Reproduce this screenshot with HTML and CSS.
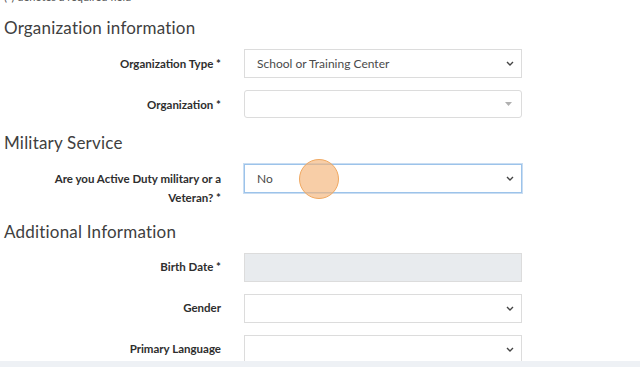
FILE: index.html
```html
<!DOCTYPE html>
<html lang="en">
<head>
    <meta charset="UTF-8">
    <title>Registration</title>
    <link rel="stylesheet" href="styles.css">
</head>
<body>
    <p class="required-note">(*) denotes a required field</p>

    <h2 class="section-title first">Organization information</h2>

    <div class="form-row">
        <label class="form-label">Organization Type *</label>
        <div class="form-field select-field">
            <span>School or Training Center</span>
            <svg class="chevron" width="8" height="5" viewBox="0 0 8 5"><path d="M1 1 L4 4 L7 1" fill="none" stroke="#444" stroke-width="1.4"/></svg>
        </div>
    </div>

    <div class="form-row">
        <label class="form-label">Organization *</label>
        <div class="form-field combo-field">
            <span></span>
            <svg class="caret" width="7" height="4" viewBox="0 0 7 4"><path d="M0 0 H7 L3.5 4 Z" fill="#b0b0b0"/></svg>
        </div>
    </div>

    <h2 class="section-title">Military Service</h2>

    <div class="form-row">
        <label class="form-label">Are you Active Duty military or a Veteran? *</label>
        <div class="form-field select-field focused">
            <span>No</span>
            <svg class="chevron" width="8" height="5" viewBox="0 0 8 5"><path d="M1 1 L4 4 L7 1" fill="none" stroke="#444" stroke-width="1.4"/></svg>
            <div class="click-marker"></div>
        </div>
    </div>

    <h2 class="section-title">Additional Information</h2>

    <div class="form-row">
        <label class="form-label">Birth Date *</label>
        <div class="form-field disabled-field"></div>
    </div>

    <div class="form-row">
        <label class="form-label">Gender</label>
        <div class="form-field select-field">
            <span></span>
            <svg class="chevron" width="8" height="5" viewBox="0 0 8 5"><path d="M1 1 L4 4 L7 1" fill="none" stroke="#444" stroke-width="1.4"/></svg>
        </div>
    </div>

    <div class="form-row">
        <label class="form-label">Primary Language</label>
        <div class="form-field select-field">
            <span></span>
            <svg class="chevron" width="8" height="5" viewBox="0 0 8 5"><path d="M1 1 L4 4 L7 1" fill="none" stroke="#444" stroke-width="1.4"/></svg>
        </div>
    </div>

    <div class="bottom-bar"></div>
</body>
</html>
```

FILE: styles.css
```css
:root {
    --text-color: #333;
    --label-color: #2e2e2e;
    --border-color: #dcdcdc;
    --focus-color: #9cc3ea;
    --disabled-bg: #e8ebee;
}

body {
    margin: 0;
    font-family: Lato, 'Open Sans', sans-serif;
    color: var(--text-color);
    background: #ffffff;
    overflow: hidden;
}

.required-note {
    margin: -10px 0 0 4px;
    font-size: 11px;
    line-height: 13px;
    color: #555;
}

.section-title {
    margin: 13px 0 0 4px;
    font-size: 17px;
    font-weight: 400;
    line-height: 24px;
    color: #404040;
    letter-spacing: 0.2px;
}

.section-title.first {
    margin-top: 13px;
}

.form-row {
    display: grid;
    grid-template-columns: 221px 278px;
    column-gap: 23px;
    margin-top: 12px;
}

.section-title + .form-row {
    margin-top: 9px;
}

.form-label {
    text-align: right;
    font-size: 11.5px;
    font-weight: 700;
    line-height: 19px;
    padding-top: 4.5px;
    padding-left: 40px;
    color: var(--label-color);
}

.form-field {
    position: relative;
    height: 27px;
    border: 1px solid var(--border-color);
    display: flex;
    align-items: center;
    justify-content: space-between;
    padding: 0 7px 0 12px;
    font-size: 12px;
    color: #4a4a4a;
}

.combo-field {
    border-radius: 3px;
    height: 26px;
    padding-right: 9px;
}

.focused {
    border-color: var(--focus-color);
    box-shadow: 0 0 0 1px #c9ddf2;
}

.disabled-field {
    background: var(--disabled-bg);
}

.click-marker {
    position: absolute;
    left: 54px;
    top: -6px;
    width: 38px;
    height: 38px;
    border-radius: 50%;
    border: 1px solid #f0a860;
    background: rgba(245, 180, 120, 0.65);
}

.bottom-bar {
    position: fixed;
    left: 0;
    right: 0;
    bottom: 0;
    height: 6px;
    background: #eef1f5;
}
```
